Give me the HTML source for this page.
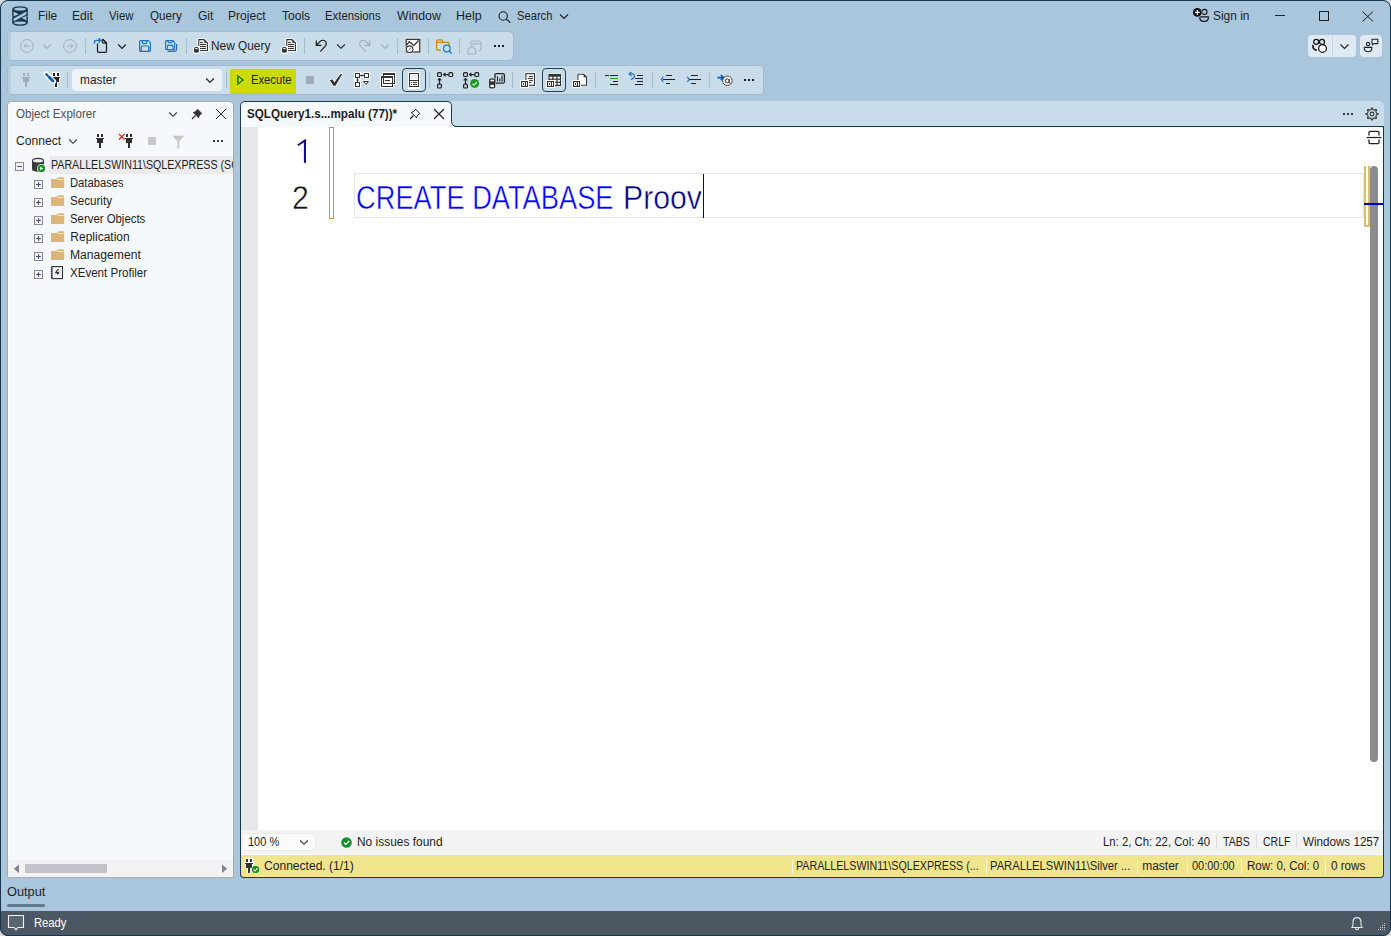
<!DOCTYPE html>
<html><head><meta charset="utf-8">
<style>
*{box-sizing:border-box;margin:0;padding:0}
html,body{width:1391px;height:936px;overflow:hidden;background:#dcdcdc}
body{font-family:"Liberation Sans",sans-serif;position:relative}
.a{position:absolute;display:block}
.t{position:absolute;white-space:nowrap;transform-origin:0 0}
</style></head><body>

<div class="a" style="left:0px;top:0px;width:1391px;height:936px;background:#a9c6dd;border-radius:8px"></div>
<svg class="a" style="left:12px;top:6px;" width="16" height="20" viewBox="0 0 16 20"><path fill="#1c3549" d="M0.2 3.3 A7.8 3.1 0 0 1 15.8 3.3 V9 Q15.8 10 15.2 10.2 Q15.8 10.5 15.8 11.2 V16.7 A7.8 3.1 0 0 1 0.2 16.7 V11.2 Q0.2 10.5 0.8 10.2 Q0.2 10 0.2 9Z"/>
<g fill="#abc7dd"><ellipse cx="8" cy="3.1" rx="6" ry="1.5"/><ellipse cx="8" cy="16.9" rx="6" ry="1.5"/>
<path d="M1.6 5.6 Q4 7.4 6.8 8.3 L1.6 10.2Z"/><path d="M1.6 12.6 L14.4 5.4 V8.4 L1.6 15.6Z"/><path d="M14.4 10 L9.4 11.9 Q12 12.6 14.4 14.4Z"/></g></svg>
<div class="t" style="left:38.31px;top:9.86px;font-size:12.00px;line-height:12.00px;color:#1e1e1e;transform:scaleX(0.9888);">File</div>
<div class="t" style="left:72.09px;top:9.86px;font-size:12.00px;line-height:12.00px;color:#1e1e1e;transform:scaleX(1.0051);">Edit</div>
<div class="t" style="left:109.35px;top:9.86px;font-size:12.00px;line-height:12.00px;color:#1e1e1e;transform:scaleX(0.9457);">View</div>
<div class="t" style="left:149.97px;top:9.86px;font-size:12.00px;line-height:12.00px;color:#1e1e1e;transform:scaleX(0.9720);">Query</div>
<div class="t" style="left:197.60px;top:9.86px;font-size:12.00px;line-height:12.00px;color:#1e1e1e;transform:scaleX(1.0034);">Git</div>
<div class="t" style="left:228.30px;top:9.86px;font-size:12.00px;line-height:12.00px;color:#1e1e1e;transform:scaleX(1.0041);">Project</div>
<div class="t" style="left:282.25px;top:9.86px;font-size:12.00px;line-height:12.00px;color:#1e1e1e;transform:scaleX(1.0037);">Tools</div>
<div class="t" style="left:325.45px;top:9.86px;font-size:12.00px;line-height:12.00px;color:#1e1e1e;transform:scaleX(0.9467);">Extensions</div>
<div class="t" style="left:397.05px;top:9.86px;font-size:12.00px;line-height:12.00px;color:#1e1e1e;transform:scaleX(1.0270);">Window</div>
<div class="t" style="left:456.36px;top:9.86px;font-size:12.00px;line-height:12.00px;color:#1e1e1e;transform:scaleX(1.0388);">Help</div>
<div class="t" style="left:516.59px;top:9.86px;font-size:12.00px;line-height:12.00px;color:#1e1e1e;transform:scaleX(0.9319);">Search</div>
<svg class="a" style="left:498px;top:11px;" width="14" height="12" viewBox="0 0 14 12"><circle cx="5.2" cy="5" r="4.2" fill="none" stroke="#1e1e1e" stroke-width="1.1"/><path d="M8.2 8 L12.5 11.6" stroke="#1e1e1e" stroke-width="1.2"/></svg>
<svg class="a" style="left:559px;top:13px;" width="10" height="7" viewBox="0 0 10 7"><path d="M1 1.5 L5 5.5 L9 1.5" fill="none" stroke="#1e1e1e" stroke-width="1.1"/></svg>
<svg class="a" style="left:1192px;top:7px;" width="18" height="16" viewBox="0 0 18 16"><circle cx="12.5" cy="4.9" r="2.5" fill="none" stroke="#111" stroke-width="1.1"/>
<path d="M7.8 9.9 H16.3 Q16.9 14.4 12.1 14.4 Q7.3 14.4 7.8 9.9Z" fill="none" stroke="#111" stroke-width="1.2"/>
<circle cx="5.3" cy="5.4" r="5.2" fill="#abc7dd"/><circle cx="5.3" cy="5.4" r="4.4" fill="#111"/><path d="M5.3 3V7.8M2.9 5.4H7.7" stroke="#fff" stroke-width="1.2"/></svg>
<div class="t" style="left:1212.75px;top:9.86px;font-size:12.00px;line-height:12.00px;color:#1e1e1e;transform:scaleX(0.9929);">Sign in</div>
<div class="a" style="left:1275px;top:15px;width:10px;height:1px;background:#1e1e1e;"></div>
<div class="a" style="left:1319px;top:11px;width:10px;height:10px;background:transparent;border:1px solid #1e1e1e"></div>
<svg class="a" style="left:1362px;top:11px;" width="12" height="11" viewBox="0 0 12 11"><path d="M0.5 0.5 L11 10.5 M11 0.5 L0.5 10.5" stroke="#1e1e1e" stroke-width="1"/></svg>
<div class="a" style="left:1308px;top:35px;width:48px;height:22px;background:#e0eaf2;border-radius:4px"></div>
<div class="a" style="left:1332px;top:35px;width:1px;height:22px;background:#c6d5e1;"></div>
<div class="a" style="left:1360px;top:35px;width:22px;height:22px;background:#e0eaf2;border-radius:4px"></div>
<svg class="a" style="left:1312px;top:38px;" width="16" height="16" viewBox="0 0 16 16"><circle cx="4.2" cy="3.8" r="2.5" fill="none" stroke="#111" stroke-width="1.3"/><circle cx="10" cy="3.8" r="2.5" fill="none" stroke="#111" stroke-width="1.3"/>
<path d="M1.1 7 Q0.3 11.6 4.8 12.3" fill="none" stroke="#111" stroke-width="1.7"/>
<circle cx="10.5" cy="10.4" r="5" fill="#f2f6fa"/><circle cx="10.5" cy="10.4" r="3.9" fill="#fff" stroke="#111" stroke-width="1.3"/></svg>
<svg class="a" style="left:1339px;top:43px;" width="11" height="8" viewBox="0 0 11 8"><path d="M1.5 1.5 L5.5 5.5 L9.5 1.5" fill="none" stroke="#222" stroke-width="1.1"/></svg>
<svg class="a" style="left:1363px;top:38px;" width="17" height="15" viewBox="0 0 17 15"><circle cx="5" cy="6.1" r="1.7" fill="none" stroke="#222" stroke-width="1.1"/>
<path d="M1.3 9.4 H8.9 Q9.1 13.8 5.1 13.8 Q1.1 13.8 1.3 9.4Z" fill="none" stroke="#222" stroke-width="1.1"/>
<path d="M9 1.2 H14.8 V5.6 H11 L9.4 6.9 V5.6 H9Z" fill="none" stroke="#222" stroke-width="1.1" stroke-linejoin="round"/></svg>
<div class="a" style="left:7px;top:31px;width:507px;height:30px;background:#c9dcea;border-radius:5px;border:1px solid #9fbad0"></div>
<div class="a" style="left:8px;top:32px;width:3px;height:28px;background:#b9cddc;border-radius:4px 0 0 4px"></div>
<svg class="a" style="left:20px;top:39px;" width="14" height="14" viewBox="0 0 14 14"><circle cx="7" cy="7" r="6.4" fill="none" stroke="#a3afb8" stroke-width="1"/><path d="M10 7H4M6.5 4.5 L4 7 L6.5 9.5" fill="none" stroke="#a3afb8" stroke-width="1"/></svg>
<svg class="a" style="left:42px;top:43px;" width="10" height="7" viewBox="0 0 10 7"><path d="M1.2 1.5 L5 5.3 L8.8 1.5" fill="none" stroke="#a3afb8" stroke-width="1.1"/></svg>
<svg class="a" style="left:63px;top:39px;" width="14" height="14" viewBox="0 0 14 14"><circle cx="7" cy="7" r="6.4" fill="none" stroke="#a3afb8" stroke-width="1"/><path d="M4 7H10M7.5 4.5 L10 7 L7.5 9.5" fill="none" stroke="#a3afb8" stroke-width="1"/></svg>
<div class="a" style="left:85px;top:38px;width:1px;height:16px;background:#a6bccc;"></div>
<svg class="a" style="left:90px;top:35px;" width="22" height="21" viewBox="0 0 22 21"><path d="M7.5 8.6 V16.3 Q7.5 17.3 8.5 17.3 H15.5 Q16.5 17.3 16.5 16.3 V7.9 L12.6 4.3" fill="none" stroke="#1e1e1e" stroke-width="1.25"/>
<path d="M12.6 4.3 L16.5 7.9" stroke="#1e1e1e" stroke-width="1.3"/><path d="M12.3 4.3 V7.1 Q12.3 8.2 13.4 8.2 H16.5" fill="none" stroke="#1e1e1e" stroke-width="1.2"/>
<path d="M4.5 8.5 V6.6 Q4.5 5.4 5.8 5.4 H10.3" fill="none" stroke="#1a73c8" stroke-width="1.4"/><path d="M8.5 3.3 L10.7 5.4 L8.5 7.5" fill="none" stroke="#1a73c8" stroke-width="1.4"/></svg>
<svg class="a" style="left:117px;top:43px;" width="10" height="7" viewBox="0 0 10 7"><path d="M1.2 1.5 L5 5.3 L8.8 1.5" fill="none" stroke="#1e1e1e" stroke-width="1.2"/></svg>
<svg class="a" style="left:139px;top:40px;" width="13" height="13" viewBox="0 0 13 13"><path d="M1.7 0.6 H9.3 L11.4 2.7 V10.3 Q11.4 11.3 10.4 11.3 H1.7 Q0.6 11.3 0.6 10.3 V1.7 Q0.6 0.6 1.7 0.6Z" fill="none" stroke="#1a73c8" stroke-width="1.2"/>
<path d="M3.3 0.6 V2.6 Q3.3 3.6 4.3 3.6 H6.6 Q7.6 3.6 7.6 2.6 V0.6 M2.2 11.3 V7 Q2.2 6 3.2 6 H8.7 Q9.7 6 9.7 7 V11.3" fill="none" stroke="#1a73c8" stroke-width="1.2"/></svg>
<svg class="a" style="left:165px;top:40px;" width="13" height="13" viewBox="0 0 13 13"><path d="M1.4 0.6 H7.8 L9.7 2.5 V8.6 Q9.7 9.6 8.7 9.6 H1.4 Q0.6 9.6 0.6 8.8 V1.4 Q0.6 0.6 1.4 0.6Z" fill="none" stroke="#1a73c8" stroke-width="1.15"/>
<path d="M3 0.6 V1.9 Q3 2.7 3.8 2.7 H6.2 Q7 2.7 7 1.9 V0.6 M2.3 9.6 V6.2 Q2.3 5.4 3.1 5.4 H7.2 Q8 5.4 8 6.2 V9.6" fill="none" stroke="#1a73c8" stroke-width="1.1"/>
<path d="M11.6 4.1 V8.8 Q11.6 11.4 9 11.4 H2.6" fill="none" stroke="#1a73c8" stroke-width="1.2"/></svg>
<div class="a" style="left:186px;top:38px;width:1px;height:16px;background:#a6bccc;"></div>
<svg class="a" style="left:190px;top:36px;" width="22" height="20" viewBox="0 0 22 20"><path d="M8.8 3.6 H14 L17.4 7 V14.5 H8.8Z" fill="#fff" stroke="#fff" stroke-width="3" stroke-linejoin="round"/>
<path d="M8.8 10 V3.6 H14 L17.4 7 V14.5 H10" fill="#fff" stroke="#333" stroke-width="1.1"/>
<path d="M14.2 3.8 L17.2 6.8 H14.2Z" fill="#333"/>
<g fill="#333"><rect x="10" y="5.9" width="2.8" height="1.1"/><rect x="10" y="7.9" width="5.9" height="1.1"/><rect x="10" y="9.9" width="5.9" height="1.1"/><rect x="10" y="11.9" width="5.9" height="1.1"/></g>
<rect x="3" y="10.2" width="7" height="7.5" rx="2.5" fill="#fff"/>
<path d="M4 12.3 Q4 11.1 6.4 11.1 Q8.8 11.1 8.8 12.3 V15.5 Q8.8 16.8 6.4 16.8 Q4 16.8 4 15.5Z" fill="#333"/>
<ellipse cx="6.4" cy="12.6" rx="1.7" ry="0.7" fill="#e8e8e8"/></svg>
<div class="t" style="left:210.51px;top:39.86px;font-size:12.00px;line-height:12.00px;color:#1e1e1e;transform:scaleX(0.9890);">New Query</div>
<svg class="a" style="left:278px;top:36px;" width="22" height="20" viewBox="0 0 22 20"><path d="M8.8 3.6 H14 L17.4 7 V14.5 H8.8Z" fill="#fff" stroke="#fff" stroke-width="3" stroke-linejoin="round"/>
<path d="M8.8 10 V3.6 H14 L17.4 7 V14.5 H10" fill="#fff" stroke="#333" stroke-width="1.1"/>
<path d="M14.2 3.8 L17.2 6.8 H14.2Z" fill="#333"/>
<g fill="#333"><rect x="10" y="5.9" width="2.8" height="1.1"/><rect x="10" y="7.9" width="5.9" height="1.1"/><rect x="10" y="9.9" width="5.9" height="1.1"/><rect x="10" y="11.9" width="5.9" height="1.1"/></g>
<rect x="3" y="10.2" width="7" height="7.5" rx="2.5" fill="#fff"/>
<path d="M4 12.3 Q4 11.1 6.4 11.1 Q8.8 11.1 8.8 12.3 V15.5 Q8.8 16.8 6.4 16.8 Q4 16.8 4 15.5Z" fill="#333"/>
<ellipse cx="6.4" cy="12.6" rx="1.7" ry="0.7" fill="#e8e8e8"/></svg>
<div class="a" style="left:304px;top:38px;width:1px;height:16px;background:#a6bccc;"></div>
<svg class="a" style="left:315px;top:39px;" width="14" height="14" viewBox="0 0 14 14"><path d="M1.3 1.4 V6.4 H6.5" fill="none" stroke="#1e1e1e" stroke-width="1.2"/><path d="M1.6 6 L5.5 2.1 Q7.6 0.5 10 1.9 Q12.4 4 10.4 7 L5.3 12.6" fill="none" stroke="#1e1e1e" stroke-width="1.2"/></svg>
<svg class="a" style="left:336px;top:43px;" width="10" height="7" viewBox="0 0 10 7"><path d="M1.2 1.5 L5 5.3 L8.8 1.5" fill="none" stroke="#1e1e1e" stroke-width="1.1"/></svg>
<svg class="a" style="left:358px;top:39px;" width="14" height="14" viewBox="0 0 14 14"><path d="M11.7 1.4 V6.4 H6.5" fill="none" stroke="#a3afb8" stroke-width="1.1"/><path d="M11.4 6 L7.5 2.1 Q5.4 0.5 3 1.9 Q0.6 4 2.6 7 L7.7 12.6" fill="none" stroke="#a3afb8" stroke-width="1.1"/></svg>
<svg class="a" style="left:380px;top:43px;" width="10" height="7" viewBox="0 0 10 7"><path d="M1.2 1.5 L5 5.3 L8.8 1.5" fill="none" stroke="#a3afb8" stroke-width="1.1"/></svg>
<div class="a" style="left:397px;top:38px;width:1px;height:16px;background:#a6bccc;"></div>
<svg class="a" style="left:404px;top:36px;" width="20" height="20" viewBox="0 0 20 20"><rect x="1" y="1.7" width="16" height="15.3" fill="#fff"/>
<rect x="2.2" y="3.3" width="13.6" height="12.7" fill="#f6f6f6" stroke="#333" stroke-width="1.3"/>
<path d="M2.5 9.4 L5.3 5.7 L9.9 9.4 L14.6 4.5" fill="none" stroke="#333" stroke-width="1.2"/>
<circle cx="5.6" cy="13.2" r="4.4" fill="#fff"/><circle cx="5.6" cy="13.2" r="3.3" fill="#f6f6f6" stroke="#333" stroke-width="1.1"/>
<path d="M3 15.5 Q5.6 17.5 8.2 15.5 V16.2 Q5.6 17.8 3 16.2Z" fill="#333"/><path d="M4.7 14 L6.6 12.2" stroke="#333" stroke-width="1"/></svg>
<div class="a" style="left:428px;top:38px;width:1px;height:16px;background:#a6bccc;"></div>
<svg class="a" style="left:435px;top:38px;" width="18" height="17" viewBox="0 0 18 17"><path d="M6 12.2 H3 Q1.6 12.2 1.6 10.8 V3.2 Q1.6 1.9 3 1.9 H6.3 Q7.5 1.9 7.5 3.2 V4.3 H12.6 Q14.1 4.3 14.1 5.8 V7.5" fill="none" stroke="#c8860a" stroke-width="1.2"/>
<path d="M1.6 4.3 H7.5" stroke="#c8860a" stroke-width="1.2"/>
<circle cx="11.9" cy="10.5" r="3.3" fill="none" stroke="#1a78d0" stroke-width="1.3"/><path d="M14.2 12.9 L16.6 15.4" stroke="#1a78d0" stroke-width="1.4"/></svg>
<div class="a" style="left:459px;top:38px;width:1px;height:16px;background:#a6bccc;"></div>
<svg class="a" style="left:467px;top:40px;" width="15" height="15" viewBox="0 0 15 15"><path d="M3.5 3.5 V2.5 Q3.5 1 5 1 H12.5 Q14 1 14 2.5 V9 Q14 10.5 12.5 10.5 H11.5" fill="none" stroke="#a8b2ba" stroke-width="1.1"/><path d="M3.5 3.8 H14" stroke="#a8b2ba" stroke-width="1.1"/>
<path d="M1 14 V9.3 L4.8 6 L8.6 9.3 V14Z" fill="none" stroke="#a8b2ba" stroke-width="1.1"/></svg>
<div class="a" style="left:494px;top:45px;width:2px;height:2px;background:#1e1e1e;"></div>
<div class="a" style="left:498px;top:45px;width:2px;height:2px;background:#1e1e1e;"></div>
<div class="a" style="left:502px;top:45px;width:2px;height:2px;background:#1e1e1e;"></div>
<div class="a" style="left:7px;top:65px;width:757px;height:30px;background:#c9dcea;border-radius:5px;border:1px solid #9fbad0"></div>
<div class="a" style="left:8px;top:66px;width:3px;height:28px;background:#b9cddc;border-radius:4px 0 0 4px"></div>
<svg class="a" style="left:21px;top:72px;" width="10" height="16" viewBox="0 0 10 16"><g fill="#a3adb5"><rect x="2" y="1" width="2" height="3"/><rect x="6" y="1" width="2" height="3"/><rect x="1" y="5" width="8" height="1"/><rect x="2" y="6" width="6" height="4"/><rect x="4" y="10" width="2" height="5"/></g></svg>
<svg class="a" style="left:51px;top:72px;" width="10" height="16" viewBox="0 0 10 16"><g fill="#fff"><rect x="1" y="0" width="4" height="5"/><rect x="5" y="0" width="4" height="5"/><rect x="0" y="4" width="10" height="3"/><rect x="1" y="5" width="8" height="6"/><rect x="3" y="9" width="4" height="7"/></g><g fill="#222"><rect x="2" y="1" width="2" height="3"/><rect x="6" y="1" width="2" height="3"/><rect x="1" y="5" width="8" height="1"/><rect x="2" y="6" width="6" height="4"/><rect x="4" y="10" width="2" height="5"/></g></svg>
<svg class="a" style="left:42px;top:70px;" width="16" height="16" viewBox="0 0 16 16"><path d="M4 4 L11.5 11.5" stroke="#fff" stroke-width="5.4" stroke-linecap="round"/><path d="M4.4 4.4 L5.4 5.4" stroke="#0f5bb5" stroke-width="2.6" stroke-linecap="round"/><path d="M7 7 L11 11" stroke="#0f5bb5" stroke-width="3" stroke-linecap="round"/></svg>
<div class="a" style="left:67px;top:72px;width:1px;height:16px;background:#a6bccc;"></div>
<div class="a" style="left:72px;top:69px;width:150px;height:22px;background:#eef3f8;border-radius:4px"></div>
<div class="t" style="left:79.61px;top:73.86px;font-size:12.00px;line-height:12.00px;color:#1e1e1e;transform:scaleX(0.9916);">master</div>
<svg class="a" style="left:205px;top:77px;" width="10" height="7" viewBox="0 0 10 7"><path d="M1.2 1.5 L5 5.3 L8.8 1.5" fill="none" stroke="#1e1e1e" stroke-width="1.2"/></svg>
<div class="a" style="left:226px;top:72px;width:1px;height:16px;background:#a6bccc;"></div>
<div class="a" style="left:230px;top:69px;width:66px;height:25px;background:#c9db00;"></div>
<svg class="a" style="left:235px;top:72px;" width="13" height="17" viewBox="0 0 13 17"><path d="M1 0 L11.3 8 L1 15.9Z" fill="#f4e600"/><path d="M1.8 2 L9.6 8 L1.8 14Z" fill="#1f8a12"/><path d="M3.9 5.4 L6.6 8 L3.9 10.6Z" fill="#f4e600"/></svg>
<div class="t" style="left:251.07px;top:73.86px;font-size:12.00px;line-height:12.00px;color:#1e1e1e;transform:scaleX(0.9343);">Execute</div>
<div class="a" style="left:306px;top:76px;width:8px;height:8px;background:#a3acb4;"></div>
<svg class="a" style="left:328px;top:72px;" width="16" height="16" viewBox="0 0 16 16"><path d="M1.8 8.2 L4.5 7.2 L6.3 10.5 L12.5 1.9 L14.3 1.9 L7.5 13.8 L5.3 13.8Z" fill="#333" stroke="#fff" stroke-width="1.6" stroke-linejoin="round" paint-order="stroke"/></svg>
<svg class="a" style="left:350px;top:68px;" width="22" height="22" viewBox="0 0 22 22"><g fill="#fff"><rect x="4" y="4" width="7" height="7"/><rect x="13" y="4" width="7" height="7"/><rect x="4" y="13" width="7" height="7"/><rect x="3.5" y="9" width="7.5" height="5"/><rect x="9" y="5.5" width="5" height="4"/><path d="M12 12.3 H20 L16 18.2Z"/></g>
<g fill="none" stroke="#333" stroke-width="1"><rect x="5.5" y="5.5" width="4" height="4"/><rect x="14.5" y="5.5" width="4" height="4"/><rect x="5.5" y="14.5" width="4" height="4"/>
<path d="M10 7.5H14M7.5 10V14"/><path d="M13.5 13.5 H18.5 L16 16.5Z" stroke-linejoin="round"/></g>
<circle cx="12" cy="7.5" r="1" fill="#333"/><circle cx="7.5" cy="12" r="1" fill="#333"/></svg>
<svg class="a" style="left:378px;top:70px;" width="20" height="20" viewBox="0 0 20 20"><g fill="#fff" stroke="#fff" stroke-width="3"><rect x="5.5" y="3.5" width="11" height="10"/><rect x="3.5" y="6.5" width="11" height="10"/></g>
<g fill="none" stroke="#333" stroke-width="1"><rect x="5.5" y="3.5" width="11" height="10"/><rect x="3.5" y="6.5" width="11" height="10"/><path d="M7 10.5H12"/></g>
<rect x="5" y="3" width="12" height="2" fill="#333"/><rect x="3" y="6" width="12" height="2" fill="#333"/></svg>
<div class="a" style="left:402px;top:68px;width:24px;height:24px;background:transparent;border:1.3px solid #25445a;border-radius:4px"></div>
<svg class="a" style="left:405px;top:70px;" width="18" height="20" viewBox="0 0 18 20"><rect x="3" y="2" width="12" height="17" fill="#fff"/><rect x="4.5" y="3.5" width="9" height="13" fill="#fff" stroke="#333" stroke-width="1"/>
<rect x="6" y="5" width="6" height="4" fill="#eeeeee"/><path d="M4.5 10.5H13.5M8 12.5H12M8 14.5H12" stroke="#333" stroke-width="1"/><rect x="6" y="12" width="1" height="1" fill="#333"/><rect x="6" y="14" width="1" height="1" fill="#333"/></svg>
<div class="a" style="left:429px;top:72px;width:1px;height:16px;background:#a6bccc;"></div>
<svg class="a" style="left:436px;top:71px;" width="18" height="18" viewBox="0 0 18 18"><g fill="none" stroke="#222" stroke-width="1.2"><rect x="1.6" y="1.7" width="3.8" height="3.8" rx="1"/><rect x="12.9" y="1.7" width="3.8" height="3.8" rx="1"/><rect x="1.6" y="13.2" width="3.8" height="3.8" rx="1"/>
<path d="M7.6 3.6 H12.6 M9.4 1.8 L7.6 3.6 L9.4 5.4"/><path d="M3.5 13 V7.6 M1.7 9.4 L3.5 7.6 L5.3 9.4"/></g></svg>
<svg class="a" style="left:462px;top:71px;" width="18" height="18" viewBox="0 0 18 18"><g fill="none" stroke="#222" stroke-width="1.2"><rect x="1.6" y="1.7" width="3.8" height="3.8" rx="1"/><rect x="12.9" y="1.7" width="3.8" height="3.8" rx="1"/><rect x="1.6" y="13.2" width="3.8" height="3.8" rx="1"/>
<path d="M7.6 3.6 H12.6 M9.4 1.8 L7.6 3.6 L9.4 5.4"/><path d="M3.5 13 V7.6 M1.7 9.4 L3.5 7.6 L5.3 9.4"/></g><circle cx="12.6" cy="12.4" r="4.5" fill="#1b9a1b"/><path d="M10.3 12.6 L12 14.2 L15 11" fill="none" stroke="#dff0df" stroke-width="1.2"/></svg>
<svg class="a" style="left:488px;top:72px;" width="18" height="17" viewBox="0 0 18 17"><rect x="7" y="1.6" width="9.4" height="9.6" rx="1.5" fill="none" stroke="#222" stroke-width="1.3"/>
<path d="M9.5 4.2 V9.5 M11.8 6.5 V9.5 M14 3.5 V9.5" stroke="#222" stroke-width="1.1"/>
<rect x="1" y="6.2" width="6.6" height="10.2" fill="#c9dcea"/>
<path d="M1.7 8 Q1.7 6.9 4.2 6.9 Q6.6 6.9 6.6 8 V14.8 Q6.6 15.9 4.2 15.9 Q1.7 15.9 1.7 14.8Z" fill="#fff" stroke="#222" stroke-width="1.2"/>
<rect x="1.7" y="9.3" width="4.9" height="3.6" fill="#333"/></svg>
<div class="a" style="left:512px;top:72px;width:1px;height:16px;background:#a6bccc;"></div>
<svg class="a" style="left:520px;top:72px;" width="17" height="16" viewBox="0 0 17 16"><rect x="5.9" y="1.7" width="8.6" height="11.6" fill="#fff" stroke="#fff" stroke-width="2.2"/><rect x="5.9" y="1.7" width="8.6" height="11.6" fill="#fff" stroke="#333" stroke-width="1.1"/>
<path d="M8.8 4.4H13M7.8 6.4H13M7.8 8.4H13M8.8 10.4H11.5" stroke="#333" stroke-width="1"/><rect x="0" y="8" width="9" height="8" fill="#fff"/><rect x="1" y="9" width="7" height="6" fill="#333"/><path d="M2.5 10.5H4.5V13.5H2.5Z" fill="none" stroke="#fff" stroke-width="1"/><path d="M6.5 10V14" stroke="#fff" stroke-width="1"/></svg>
<div class="a" style="left:542px;top:68px;width:24px;height:24px;background:transparent;border:1.3px solid #25445a;border-radius:4px"></div>
<svg class="a" style="left:545px;top:72px;" width="18" height="16" viewBox="0 0 18 16"><rect x="3" y="1.6" width="13.4" height="12.9" fill="#fff"/><rect x="3.4" y="2" width="12.6" height="12.1" fill="#333"/>
<g fill="#fff"><rect x="4.6" y="4.7" width="2.7" height="1.9"/><rect x="8.5" y="4.7" width="2.9" height="1.9"/><rect x="12.6" y="4.7" width="2.3" height="1.9"/>
<rect x="4.6" y="7.8" width="2.7" height="1.9"/><rect x="8.5" y="7.8" width="2.9" height="1.9"/><rect x="12.6" y="7.8" width="2.3" height="1.9"/>
<rect x="8.5" y="10.9" width="2.9" height="1.9"/><rect x="12.6" y="10.9" width="2.3" height="1.9"/></g><rect x="1" y="8" width="9" height="8" fill="#fff"/><rect x="2" y="9" width="7" height="6" fill="#333"/><path d="M3.5 10.5H5.5V13.5H3.5Z" fill="none" stroke="#fff" stroke-width="1"/><path d="M7.5 10V14" stroke="#fff" stroke-width="1"/></svg>
<svg class="a" style="left:571px;top:72px;" width="18" height="16" viewBox="0 0 18 16"><path d="M6.9 2.3 H12.8 L15.6 5.1 V13.2 H6.9Z" fill="#fff" stroke="#fff" stroke-width="2.2"/><path d="M6.9 2.3 H12.8 L15.6 5.1 V13.2 H6.9Z" fill="#fff" stroke="#333" stroke-width="1.1"/><path d="M12.6 2.3 L15.6 5.3 H12.6Z" fill="#333"/><rect x="1" y="8" width="9" height="8" fill="#fff"/><rect x="2" y="9" width="7" height="6" fill="#333"/><path d="M3.5 10.5H5.5V13.5H3.5Z" fill="none" stroke="#fff" stroke-width="1"/><path d="M7.5 10V14" stroke="#fff" stroke-width="1"/></svg>
<div class="a" style="left:595px;top:72px;width:1px;height:16px;background:#a6bccc;"></div>
<div class="a" style="left:605px;top:75px;width:4px;height:1.3px;background:#222;"></div>
<div class="a" style="left:610px;top:75px;width:8px;height:1.3px;background:#222;"></div>
<div class="a" style="left:610px;top:78px;width:8px;height:1.3px;background:#1b9a1b;"></div>
<div class="a" style="left:613px;top:81px;width:5px;height:1.3px;background:#222;"></div>
<div class="a" style="left:610px;top:84px;width:8px;height:1.3px;background:#222;"></div>
<svg class="a" style="left:628px;top:71px;" width="10" height="10" viewBox="0 0 10 10"><path d="M3.4 1 L1.2 3 L3.6 5" fill="none" stroke="#1a73c8" stroke-width="1.2"/><path d="M1.5 3 Q6.5 2 6.5 5 Q6.5 6.8 3 8.6" fill="none" stroke="#1a73c8" stroke-width="1.2"/></svg>
<div class="a" style="left:637px;top:75px;width:6px;height:1.3px;background:#222;"></div>
<div class="a" style="left:635px;top:78px;width:8px;height:1.3px;background:#222;"></div>
<div class="a" style="left:637px;top:81px;width:6px;height:1.3px;background:#222;"></div>
<div class="a" style="left:635px;top:84px;width:8px;height:1.3px;background:#222;"></div>
<div class="a" style="left:652px;top:72px;width:1px;height:16px;background:#a6bccc;"></div>
<svg class="a" style="left:660px;top:76px;" width="5" height="7" viewBox="0 0 5 7"><path d="M3.5 1 L1.2 3.4 L3.5 5.8" fill="none" stroke="#1a73c8" stroke-width="1.1"/></svg>
<div class="a" style="left:666px;top:75px;width:6px;height:1.3px;background:#222;"></div>
<div class="a" style="left:663px;top:79px;width:12px;height:1.3px;background:#222;"></div>
<div class="a" style="left:666px;top:83px;width:4px;height:1.3px;background:#222;"></div>
<svg class="a" style="left:686px;top:76px;" width="5" height="7" viewBox="0 0 5 7"><path d="M1.2 1 L3.5 3.4 L1.2 5.8" fill="none" stroke="#1a73c8" stroke-width="1.1"/></svg>
<div class="a" style="left:691px;top:75px;width:7px;height:1.3px;background:#222;"></div>
<div class="a" style="left:689px;top:79px;width:12px;height:1.3px;background:#222;"></div>
<div class="a" style="left:691px;top:83px;width:5px;height:1.3px;background:#222;"></div>
<div class="a" style="left:709px;top:72px;width:1px;height:16px;background:#a6bccc;"></div>
<svg class="a" style="left:716px;top:72px;" width="18" height="16" viewBox="0 0 18 16"><circle cx="11.4" cy="8.7" r="5.6" fill="#fff"/>
<circle cx="11.4" cy="8.7" r="4.8" fill="none" stroke="#333" stroke-width="1"/><circle cx="11.2" cy="8.9" r="2" fill="none" stroke="#333" stroke-width="1"/><path d="M13.2 7 V10.2 Q13.3 11.6 14.6 11.2" fill="none" stroke="#333" stroke-width="1"/>
<path d="M1.5 5.6 H7.3 M4.8 3 L7.6 5.6 L4.8 8.2" fill="none" stroke="#0f5bb5" stroke-width="1.7"/></svg>
<div class="a" style="left:744px;top:79px;width:2px;height:2px;background:#1e1e1e;"></div>
<div class="a" style="left:748px;top:79px;width:2px;height:2px;background:#1e1e1e;"></div>
<div class="a" style="left:752px;top:79px;width:2px;height:2px;background:#1e1e1e;"></div>
<div class="a" style="left:7px;top:101px;width:227px;height:777px;background:#f5f8fc;border-radius:5px 5px 0 0;border:1px solid #a9adb1;box-shadow:inset 1px 1px 0 #fff"></div>
<div class="t" style="left:16.07px;top:107.86px;font-size:12.00px;line-height:12.00px;color:#505050;transform:scaleX(0.9689);">Object Explorer</div>
<svg class="a" style="left:168px;top:111px;" width="10" height="7" viewBox="0 0 10 7"><path d="M1.2 1.5 L5 5.3 L8.8 1.5" fill="none" stroke="#333" stroke-width="1.1"/></svg>
<svg class="a" style="left:191px;top:108px;" width="12" height="12" viewBox="0 0 12 12"><path d="M6.5 1.2 L10.8 5.5 L8.5 7.2 L7.5 9.8 L2.2 4.5 L4.8 3.5Z" fill="#333" stroke="#333" stroke-width="0.8" stroke-linejoin="round"/><path d="M4.5 7.5 L1 11" stroke="#333" stroke-width="1.1"/></svg>
<svg class="a" style="left:215px;top:108px;" width="12" height="12" viewBox="0 0 12 12"><path d="M1 1 L11 11 M11 1 L1 11" stroke="#333" stroke-width="1"/></svg>
<div class="t" style="left:15.99px;top:134.86px;font-size:12.00px;line-height:12.00px;color:#1e1e1e;transform:scaleX(1.0114);">Connect</div>
<svg class="a" style="left:68px;top:138px;" width="10" height="7" viewBox="0 0 10 7"><path d="M1.2 1.5 L5 5.3 L8.8 1.5" fill="none" stroke="#333" stroke-width="1.1"/></svg>
<svg class="a" style="left:95px;top:133px;" width="10" height="16" viewBox="0 0 10 16"><g fill="#2d2d2d"><rect x="2" y="1" width="2" height="3"/><rect x="6" y="1" width="2" height="3"/><rect x="1" y="5" width="8" height="1"/><rect x="2" y="6" width="6" height="4"/><rect x="4" y="10" width="2" height="5"/></g></svg>
<svg class="a" style="left:124px;top:133px;" width="10" height="16" viewBox="0 0 10 16"><g fill="#2d2d2d"><rect x="2" y="1" width="2" height="3"/><rect x="6" y="1" width="2" height="3"/><rect x="1" y="5" width="8" height="1"/><rect x="2" y="6" width="6" height="4"/><rect x="4" y="10" width="2" height="5"/></g></svg>
<svg class="a" style="left:118px;top:133px;" width="8" height="8" viewBox="0 0 8 8"><path d="M1 1 L6.5 6.5 M6.5 1 L1 6.5" stroke="#c42b1c" stroke-width="1.2"/></svg>
<div class="a" style="left:148px;top:137px;width:8px;height:8px;background:#c8c8c8;"></div>
<svg class="a" style="left:172px;top:135px;" width="13" height="14" viewBox="0 0 13 14"><path d="M0.5 0.8 H12.2 L7.3 6.5 V13.5 H5.4 V6.5Z" fill="#c8c8c8"/></svg>
<div class="a" style="left:213px;top:140px;width:2px;height:2px;background:#333;"></div>
<div class="a" style="left:217px;top:140px;width:2px;height:2px;background:#333;"></div>
<div class="a" style="left:221px;top:140px;width:2px;height:2px;background:#333;"></div>
<svg class="a" style="left:15px;top:162px;" width="9" height="9" viewBox="0 0 9 9"><rect x="0.5" y="0.5" width="8" height="8" fill="#f4f4f4" stroke="#8a8a8a" stroke-width="1"/><path d="M2.2 4.5H6.8" stroke="#3b4c8a" stroke-width="1.1"/></svg>
<svg class="a" style="left:31px;top:157px;" width="16" height="16" viewBox="0 0 16 16"><path d="M1 3.5 Q1 0.8 7 0.8 Q13 0.8 13 3.5 V12.1 Q13 14.8 7 14.8 Q1 14.8 1 12.1Z" fill="#3a3a3a"/>
<ellipse cx="7" cy="3.7" rx="5" ry="1.7" fill="#eeeeee"/>
<circle cx="10.4" cy="11.4" r="4.4" fill="#f5f8fc"/><circle cx="10.4" cy="11.4" r="3.7" fill="#1a921a"/><path d="M9 9.8 L12.4 11.5 L9 13.2Z" fill="#fff"/></svg>
<div class="a" style="left:49px;top:156px;width:184px;height:18px;background:#ebebeb;"></div>
<div class="a" style="left:0;top:0;width:233px;height:936px;overflow:hidden">
<div class="t" style="left:50.81px;top:158.86px;font-size:12.00px;line-height:12.00px;color:#1e1e1e;transform:scaleX(0.8875);">PARALLELSWIN11\SQLEXPRESS (SQL Server 16.0.1000 - PARALLELSWIN11\Silver)</div>
</div>
<svg class="a" style="left:34px;top:180px;" width="9" height="9" viewBox="0 0 9 9"><rect x="0.5" y="0.5" width="8" height="8" fill="#f4f4f4" stroke="#8a8a8a" stroke-width="1"/><path d="M2.2 4.5H6.8" stroke="#3b4c8a" stroke-width="1.1"/><path d="M4.5 2.2V6.8" stroke="#3b4c8a" stroke-width="1.1"/></svg>
<svg class="a" style="left:51px;top:177px;" width="14" height="12" viewBox="0 0 14 12"><path d="M0 1.9 H5.8 L7.3 0.3 H12.2 Q13.2 0.3 13.2 1.3 V11 H0Z" fill="#dcb577"/><path d="M6.6 2.6 H12.4" stroke="#f6ead2" stroke-width="1"/></svg>
<div class="t" style="left:69.56px;top:176.86px;font-size:12.00px;line-height:12.00px;color:#1e1e1e;transform:scaleX(0.9356);">Databases</div>
<svg class="a" style="left:34px;top:198px;" width="9" height="9" viewBox="0 0 9 9"><rect x="0.5" y="0.5" width="8" height="8" fill="#f4f4f4" stroke="#8a8a8a" stroke-width="1"/><path d="M2.2 4.5H6.8" stroke="#3b4c8a" stroke-width="1.1"/><path d="M4.5 2.2V6.8" stroke="#3b4c8a" stroke-width="1.1"/></svg>
<svg class="a" style="left:51px;top:195px;" width="14" height="12" viewBox="0 0 14 12"><path d="M0 1.9 H5.8 L7.3 0.3 H12.2 Q13.2 0.3 13.2 1.3 V11 H0Z" fill="#dcb577"/><path d="M6.6 2.6 H12.4" stroke="#f6ead2" stroke-width="1"/></svg>
<div class="t" style="left:69.97px;top:194.86px;font-size:12.00px;line-height:12.00px;color:#1e1e1e;transform:scaleX(0.9684);">Security</div>
<svg class="a" style="left:34px;top:216px;" width="9" height="9" viewBox="0 0 9 9"><rect x="0.5" y="0.5" width="8" height="8" fill="#f4f4f4" stroke="#8a8a8a" stroke-width="1"/><path d="M2.2 4.5H6.8" stroke="#3b4c8a" stroke-width="1.1"/><path d="M4.5 2.2V6.8" stroke="#3b4c8a" stroke-width="1.1"/></svg>
<svg class="a" style="left:51px;top:213px;" width="14" height="12" viewBox="0 0 14 12"><path d="M0 1.9 H5.8 L7.3 0.3 H12.2 Q13.2 0.3 13.2 1.3 V11 H0Z" fill="#dcb577"/><path d="M6.6 2.6 H12.4" stroke="#f6ead2" stroke-width="1"/></svg>
<div class="t" style="left:69.98px;top:212.86px;font-size:12.00px;line-height:12.00px;color:#1e1e1e;transform:scaleX(0.9483);">Server Objects</div>
<svg class="a" style="left:34px;top:234px;" width="9" height="9" viewBox="0 0 9 9"><rect x="0.5" y="0.5" width="8" height="8" fill="#f4f4f4" stroke="#8a8a8a" stroke-width="1"/><path d="M2.2 4.5H6.8" stroke="#3b4c8a" stroke-width="1.1"/><path d="M4.5 2.2V6.8" stroke="#3b4c8a" stroke-width="1.1"/></svg>
<svg class="a" style="left:51px;top:231px;" width="14" height="12" viewBox="0 0 14 12"><path d="M0 1.9 H5.8 L7.3 0.3 H12.2 Q13.2 0.3 13.2 1.3 V11 H0Z" fill="#dcb577"/><path d="M6.6 2.6 H12.4" stroke="#f6ead2" stroke-width="1"/></svg>
<div class="t" style="left:70.30px;top:230.86px;font-size:12.00px;line-height:12.00px;color:#1e1e1e;">Replication</div>
<svg class="a" style="left:34px;top:252px;" width="9" height="9" viewBox="0 0 9 9"><rect x="0.5" y="0.5" width="8" height="8" fill="#f4f4f4" stroke="#8a8a8a" stroke-width="1"/><path d="M2.2 4.5H6.8" stroke="#3b4c8a" stroke-width="1.1"/><path d="M4.5 2.2V6.8" stroke="#3b4c8a" stroke-width="1.1"/></svg>
<svg class="a" style="left:51px;top:249px;" width="14" height="12" viewBox="0 0 14 12"><path d="M0 1.9 H5.8 L7.3 0.3 H12.2 Q13.2 0.3 13.2 1.3 V11 H0Z" fill="#dcb577"/><path d="M6.6 2.6 H12.4" stroke="#f6ead2" stroke-width="1"/></svg>
<div class="t" style="left:70.29px;top:248.86px;font-size:12.00px;line-height:12.00px;color:#1e1e1e;transform:scaleX(1.0109);">Management</div>
<svg class="a" style="left:34px;top:270px;" width="9" height="9" viewBox="0 0 9 9"><rect x="0.5" y="0.5" width="8" height="8" fill="#f4f4f4" stroke="#8a8a8a" stroke-width="1"/><path d="M2.2 4.5H6.8" stroke="#3b4c8a" stroke-width="1.1"/><path d="M4.5 2.2V6.8" stroke="#3b4c8a" stroke-width="1.1"/></svg>
<svg class="a" style="left:50px;top:265px;" width="15" height="15" viewBox="0 0 15 15"><rect x="1.9" y="1.6" width="10.6" height="12" fill="#f2f2f2" stroke="#333" stroke-width="1.1"/><path d="M0.8 2.6 H2.4" stroke="#333" stroke-width="1"/><path d="M0.8 4.6 H2.4" stroke="#333" stroke-width="1"/><path d="M0.8 6.6 H2.4" stroke="#333" stroke-width="1"/><path d="M0.8 8.6 H2.4" stroke="#333" stroke-width="1"/><path d="M0.8 10.6 H2.4" stroke="#333" stroke-width="1"/><path d="M0.8 12.6 H2.4" stroke="#333" stroke-width="1"/><path d="M8.8 4.3 Q6.6 5.3 5.7 7.6 L8.6 7.4 Q7.9 8.6 7 9.4" fill="none" stroke="#333" stroke-width="1.2"/></svg>
<div class="t" style="left:70.21px;top:266.86px;font-size:12.00px;line-height:12.00px;color:#1e1e1e;transform:scaleX(0.9629);">XEvent Profiler</div>
<div class="a" style="left:8px;top:860px;width:225px;height:17px;background:#f3f3f3;"></div>
<svg class="a" style="left:13px;top:864px;" width="7" height="10" viewBox="0 0 7 10"><path d="M6 0.5 V9 L0.8 4.8Z" fill="#7d8492"/></svg>
<div class="a" style="left:25px;top:864px;width:82px;height:9px;background:#c2c3c9;"></div>
<svg class="a" style="left:221px;top:864px;" width="7" height="10" viewBox="0 0 7 10"><path d="M1 0.5 V9 L6.2 4.8Z" fill="#7d8492"/></svg>
<div class="a" style="left:240px;top:101px;width:1144px;height:26px;background:#c9dcea;border-radius:5px 5px 0 0"></div>
<div class="a" style="left:1343px;top:113px;width:2px;height:2px;background:#333;"></div>
<div class="a" style="left:1347px;top:113px;width:2px;height:2px;background:#333;"></div>
<div class="a" style="left:1351px;top:113px;width:2px;height:2px;background:#333;"></div>
<svg class="a" style="left:1365px;top:107px;" width="14" height="14" viewBox="0 0 14 14"><path d="M11.53 6.21 L12.97 6.44 L12.97 7.56 L11.53 7.79 L10.76 9.65 L11.62 10.82 L10.82 11.62 L9.65 10.76 L7.79 11.53 L7.56 12.97 L6.44 12.97 L6.21 11.53 L4.35 10.76 L3.18 11.62 L2.38 10.82 L3.24 9.65 L2.47 7.79 L1.03 7.56 L1.03 6.44 L2.47 6.21 L3.24 4.35 L2.38 3.18 L3.18 2.38 L4.35 3.24 L6.21 2.47 L6.44 1.03 L7.56 1.03 L7.79 2.47 L9.65 3.24 L10.82 2.38 L11.62 3.18 L10.76 4.35Z" fill="none" stroke="#333" stroke-width="1.1" stroke-linejoin="round"/><circle cx="7" cy="7" r="1.9" fill="none" stroke="#333" stroke-width="1.1"/></svg>
<div class="a" style="left:240px;top:126px;width:1144px;height:729px;background:#ffffff;border:1px solid #1a364b;border-bottom:none"></div>
<div class="a" style="left:240px;top:101px;width:212px;height:26px;background:#f5f8fc;border:1px solid #1f3a4f;border-bottom:none;border-radius:5px 5px 0 0"></div>
<svg class="a" style="left:451px;top:121px;" width="6" height="7" viewBox="0 0 6 7"><path d="M0 0 V6 H6 Q0.8 6 0.8 0Z" fill="#f5f8fc"/><path d="M0.5 0 Q0.5 5.5 6 5.5" fill="none" stroke="#1f3a4f" stroke-width="1"/></svg>
<div class="t" style="left:246.66px;top:107.86px;font-size:12.00px;line-height:12.00px;color:#1e1e1e;font-weight:bold;transform:scaleX(0.9705);">SQLQuery1.s...mpalu (77))*</div>
<svg class="a" style="left:409px;top:108px;" width="12" height="12" viewBox="0 0 12 12"><path d="M6.5 1.2 L10.8 5.5 L8.5 7.2 L7.5 9.8 L2.2 4.5 L4.8 3.5Z" fill="none" stroke="#1e1e1e" stroke-width="1" stroke-linejoin="round"/><path d="M4.5 7.5 L1 11" stroke="#1e1e1e" stroke-width="1.1"/></svg>
<svg class="a" style="left:433px;top:108px;" width="12" height="12" viewBox="0 0 12 12"><path d="M1 1 L11 11 M11 1 L1 11" stroke="#1e1e1e" stroke-width="1.1"/></svg>
<div class="a" style="left:241px;top:127px;width:17px;height:703px;background:#e6e7e9;"></div>
<div class="a" style="left:329px;top:127px;width:5px;height:92px;background:#fff;border:1px solid #c49a22"></div>
<div class="a" style="left:354px;top:173px;width:1010px;height:45px;background:transparent;border:1px solid #e4e4ee"></div>
<svg class="a" style="left:295px;top:137px;" width="14" height="28" viewBox="0 0 14 28"><path d="M3.6 7.8 L10.2 3.4" stroke="#10108a" stroke-width="1.9" stroke-linecap="square"/><rect x="8.9" y="2.9" width="2.1" height="23" fill="#10108a"/></svg>
<div class="t" style="left:291.89px;top:181.12px;font-size:33.00px;line-height:33.00px;color:#111111;transform:scaleX(0.9169);-webkit-text-stroke:0.5px #fff">2</div>
<div class="t" style="left:356.14px;top:181.12px;font-size:33.00px;line-height:33.00px;color:#0000ff;transform:scaleX(0.8262);-webkit-text-stroke:0.5px #fff">CREATE DATABASE</div>
<div class="t" style="left:623.43px;top:181.12px;font-size:33.00px;line-height:33.00px;color:#000080;transform:scaleX(0.9149);-webkit-text-stroke:0.5px #fff">Proov</div>
<div class="a" style="left:703px;top:174px;width:1px;height:44px;background:#000080;"></div>
<svg class="a" style="left:1366px;top:130px;" width="16" height="15" viewBox="0 0 16 15"><path d="M3 5.5 V2.5 Q3 1.3 4.2 1.3 H11.8 Q13 1.3 13 2.5 V5.5 M3 9.5 V12.5 Q3 13.7 4.2 13.7 H11.8 Q13 13.7 13 12.5 V9.5" fill="none" stroke="#222" stroke-width="1.3"/><path d="M0.5 7.5H15.5" stroke="#222" stroke-width="1.2"/></svg>
<div class="a" style="left:1364px;top:166px;width:6px;height:61px;background:transparent;border:2px solid #d6c06c;border-top:none;border-radius:0 0 2px 2px"></div>
<div class="a" style="left:1370px;top:166px;width:8px;height:596px;background:#8b8b8b;border-radius:4px"></div>
<div class="a" style="left:1364px;top:203px;width:19px;height:2px;background:#0000cd;"></div>
<div class="a" style="left:241px;top:830px;width:1142px;height:25px;background:#f3f3f3;"></div>
<div class="a" style="left:241px;top:854px;width:1142px;height:1px;background:#ffffff;"></div>
<div class="a" style="left:242px;top:833px;width:74px;height:18px;background:#fbfbfb;border:1px solid #e8e8e8;border-radius:4px"></div>
<div class="t" style="left:247.87px;top:835.86px;font-size:12.00px;line-height:12.00px;color:#1e1e1e;transform:scaleX(0.9174);">100 %</div>
<svg class="a" style="left:299px;top:839px;" width="10" height="7" viewBox="0 0 10 7"><path d="M1.2 1.5 L5 5.3 L8.8 1.5" fill="none" stroke="#333" stroke-width="1.1"/></svg>
<svg class="a" style="left:341px;top:837px;" width="11" height="11" viewBox="0 0 11 11"><circle cx="5.5" cy="5.5" r="5.3" fill="#1a8f2e"/><path d="M3 5.6 L4.8 7.4 L8.2 4" fill="none" stroke="#fff" stroke-width="1.3"/></svg>
<div class="t" style="left:356.51px;top:835.86px;font-size:12.00px;line-height:12.00px;color:#1e1e1e;transform:scaleX(0.9941);">No issues found</div>
<div class="t" style="left:1103.06px;top:835.86px;font-size:12.00px;line-height:12.00px;color:#1e1e1e;transform:scaleX(0.9442);">Ln: 2, Ch: 22, Col: 40</div>
<div class="t" style="left:1223.48px;top:835.86px;font-size:12.00px;line-height:12.00px;color:#1e1e1e;transform:scaleX(0.8769);">TABS</div>
<div class="t" style="left:1262.58px;top:835.86px;font-size:12.00px;line-height:12.00px;color:#1e1e1e;transform:scaleX(0.8727);">CRLF</div>
<div class="t" style="left:1303.15px;top:835.86px;font-size:12.00px;line-height:12.00px;color:#1e1e1e;transform:scaleX(0.9693);">Windows 1257</div>
<div class="a" style="left:1216px;top:834px;width:1px;height:15px;background:#dcdcdc;"></div>
<div class="a" style="left:1256px;top:834px;width:1px;height:15px;background:#dcdcdc;"></div>
<div class="a" style="left:1296px;top:834px;width:1px;height:15px;background:#dcdcdc;"></div>
<div class="a" style="left:240px;top:855px;width:1144px;height:23px;background:#f0e48c;border:1px solid #1a364b;border-top:none;border-radius:0 0 4px 4px;box-shadow:inset -1px -1px 0 #f8ec90"></div>
<svg class="a" style="left:244px;top:858px;" width="10" height="16" viewBox="0 0 10 16"><g fill="#fff"><rect x="1" y="0" width="4" height="5"/><rect x="5" y="0" width="4" height="5"/><rect x="0" y="4" width="10" height="3"/><rect x="1" y="5" width="8" height="6"/><rect x="3" y="9" width="4" height="7"/></g><g fill="#333"><rect x="2" y="1" width="2" height="3"/><rect x="6" y="1" width="2" height="3"/><rect x="1" y="5" width="8" height="1"/><rect x="2" y="6" width="6" height="4"/><rect x="4" y="10" width="2" height="5"/></g></svg>
<svg class="a" style="left:251px;top:865px;" width="9" height="9" viewBox="0 0 9 9"><circle cx="4.6" cy="4.4" r="4.3" fill="#fff" opacity="0.8"/><circle cx="4.6" cy="4.4" r="3.7" fill="#1a921a"/><path d="M2.6 4.6 L4.1 6 L6.6 3.2" fill="none" stroke="#fff" stroke-width="1.1"/></svg>
<div class="t" style="left:263.90px;top:859.86px;font-size:12.00px;line-height:12.00px;color:#1e1e1e;transform:scaleX(1.0051);">Connected. (1/1)</div>
<div class="t" style="left:796.41px;top:859.86px;font-size:12.00px;line-height:12.00px;color:#1e1e1e;transform:scaleX(0.8911);">PARALLELSWIN11\SQLEXPRESS (...</div>
<div class="t" style="left:990.47px;top:859.86px;font-size:12.00px;line-height:12.00px;color:#1e1e1e;transform:scaleX(0.9332);">PARALLELSWIN11\Silver ...</div>
<div class="t" style="left:1142.20px;top:859.86px;font-size:12.00px;line-height:12.00px;color:#1e1e1e;">master</div>
<div class="t" style="left:1191.69px;top:859.86px;font-size:12.00px;line-height:12.00px;color:#1e1e1e;transform:scaleX(0.9127);">00:00:00</div>
<div class="t" style="left:1246.54px;top:859.86px;font-size:12.00px;line-height:12.00px;color:#1e1e1e;transform:scaleX(0.9581);">Row: 0, Col: 0</div>
<div class="t" style="left:1330.86px;top:859.86px;font-size:12.00px;line-height:12.00px;color:#1e1e1e;transform:scaleX(0.9724);">0 rows</div>
<div class="a" style="left:792px;top:859px;width:1px;height:15px;background:#fbf6d8;"></div>
<div class="a" style="left:986px;top:859px;width:1px;height:15px;background:#fbf6d8;"></div>
<div class="a" style="left:1137px;top:859px;width:1px;height:15px;background:#fbf6d8;"></div>
<div class="a" style="left:1187px;top:859px;width:1px;height:15px;background:#fbf6d8;"></div>
<div class="a" style="left:1241px;top:859px;width:1px;height:15px;background:#fbf6d8;"></div>
<div class="a" style="left:1325px;top:859px;width:1px;height:15px;background:#fbf6d8;"></div>
<div class="t" style="left:6.72px;top:885.86px;font-size:12.00px;line-height:12.00px;color:#1e1e1e;transform:scaleX(1.0621);">Output</div>
<div class="a" style="left:7px;top:904px;width:38px;height:3px;background:#5e7a8c;border-radius:2px"></div>
<div class="a" style="left:0px;top:911px;width:1391px;height:25px;background:#4b5863;border-radius:0 0 8px 8px"></div>
<svg class="a" style="left:7px;top:914px;" width="18" height="18" viewBox="0 0 18 18"><path d="M1.5 1.5 H16.5 V13.5 H11 L9 15.8 L7 13.5 H1.5Z" fill="#5a6670" stroke="#f2f2f2" stroke-width="1.1"/></svg>
<div class="t" style="left:34.46px;top:916.86px;font-size:12.00px;line-height:12.00px;color:#ffffff;transform:scaleX(0.9361);">Ready</div>
<svg class="a" style="left:1350px;top:916px;" width="14" height="15" viewBox="0 0 14 15"><path d="M2 11.5 Q3 10.5 3 8 V6 Q3 1.6 7 1.6 Q11 1.6 11 6 V8 Q11 10.5 12 11.5Z" fill="none" stroke="#e8e8e8" stroke-width="1.1"/><path d="M5.5 12 Q5.5 13.8 7 13.8 Q8.5 13.8 8.5 12" fill="none" stroke="#e8e8e8" stroke-width="1.1"/></svg>
<div class="a" style="left:1384px;top:923px;width:1px;height:1px;background:#cfd4d8;"></div>
<div class="a" style="left:1382px;top:925px;width:1px;height:1px;background:#cfd4d8;"></div>
<div class="a" style="left:1384px;top:925px;width:1px;height:1px;background:#cfd4d8;"></div>
<div class="a" style="left:1380px;top:927px;width:1px;height:1px;background:#cfd4d8;"></div>
<div class="a" style="left:1382px;top:927px;width:1px;height:1px;background:#cfd4d8;"></div>
<div class="a" style="left:1384px;top:927px;width:1px;height:1px;background:#cfd4d8;"></div>
<div class="a" style="left:1378px;top:929px;width:1px;height:1px;background:#cfd4d8;"></div>
<div class="a" style="left:1380px;top:929px;width:1px;height:1px;background:#cfd4d8;"></div>
<div class="a" style="left:1382px;top:929px;width:1px;height:1px;background:#cfd4d8;"></div>
<div class="a" style="left:1384px;top:929px;width:1px;height:1px;background:#cfd4d8;"></div>
<div class="a" style="left:0;top:0;width:1391px;height:936px;border:1px solid #1a364b;border-radius:8px;pointer-events:none"></div>
</body></html>
